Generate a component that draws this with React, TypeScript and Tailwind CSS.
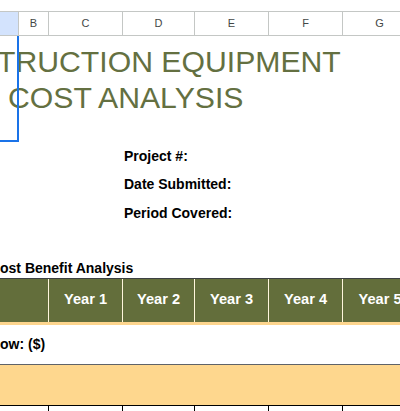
import React from 'react';

const font = { fontFamily: '"Liberation Sans", Arial, sans-serif' };

const cols = [
  { key: 'A', w: 'w-[19px]' },
  { key: 'B', w: 'w-[30px]' },
  { key: 'C', w: 'w-[74px]' },
  { key: 'D', w: 'w-[72px]' },
  { key: 'E', w: 'w-[74px]' },
  { key: 'F', w: 'w-[74px]' },
  { key: 'G', w: 'w-[74px]' },
];

const years = [
  { label: 'Year 1', w: 'w-[74px]' },
  { label: 'Year 2', w: 'w-[72px]' },
  { label: 'Year 3', w: 'w-[74px]' },
  { label: 'Year 4', w: 'w-[74px]' },
  { label: 'Year 5', w: 'w-[74px]' },
];

export default function App() {
  return (
    <div className="w-[400px] h-[411px] overflow-hidden bg-white relative" style={font}>
      <div className="h-[11px]"></div>

      {/* Column headers */}
      <div className="flex h-[25px] border-y border-[#c4c7c5] text-[11px] text-[#444746]">
        {cols.map(c => (
          <div
            key={c.key}
            className={`${c.w} shrink-0 border-r border-[#c4c7c5] flex items-center justify-center ${c.key === 'A' ? 'bg-[#d3e3fd]' : ''}`}
          >
            {c.key === 'A' ? '' : c.key}
          </div>
        ))}
      </div>

      {/* Selection outline */}
      <div className="absolute left-0 top-[36px] w-[19px] h-[106px] border-r-2 border-b-2 border-[#1a73e8]"></div>

      {/* Title */}
      <div className="mt-[8px] text-[30.2px] leading-[36.4px] text-[#647041] whitespace-nowrap">
        <div className="-ml-[3px]">TRUCTION EQUIPMENT</div>
        <div className="ml-[8px]">COST ANALYSIS</div>
      </div>

      {/* Project info */}
      <div className="mt-[25px] pl-[124px] text-[14px] leading-[28.6px] font-bold text-black">
        <div>Project #:</div>
        <div>Date Submitted:</div>
        <div>Period Covered:</div>
      </div>

      <div className="mt-[30px] h-[20px] leading-[20px] text-[14px] font-bold text-black whitespace-nowrap">
        ost Benefit Analysis
      </div>

      {/* Table */}
      <div className="border-t border-[#3c4043]">
        <div className="flex h-[43px] bg-[#636e3b] text-white font-bold text-[14.6px]">
          <div className="w-[49px] shrink-0 border-r border-[#fff6dc]"></div>
          {years.map((y, i) => (
            <div
              key={y.label}
              className={`${y.w} shrink-0 flex items-center justify-center ${i < years.length - 1 ? 'border-r border-[#fff6dc]' : ''}`}
            >
              {y.label}
            </div>
          ))}
        </div>
        <div className="h-[3px] bg-[#fdd58e]"></div>
        <div className="h-[40px] flex items-center border-b border-[#5f6368] text-[14px] font-bold text-black whitespace-nowrap">
          ow: ($)
        </div>
        <div className="h-[41px] bg-[#fed78e] border-b border-black"></div>
        <div className="flex h-[10px]">
          <div className="w-[49px] shrink-0 border-r border-black"></div>
          {years.map(y => (
            <div key={y.label} className={`${y.w} shrink-0 border-r border-black`}></div>
          ))}
        </div>
      </div>
    </div>
  );
}
